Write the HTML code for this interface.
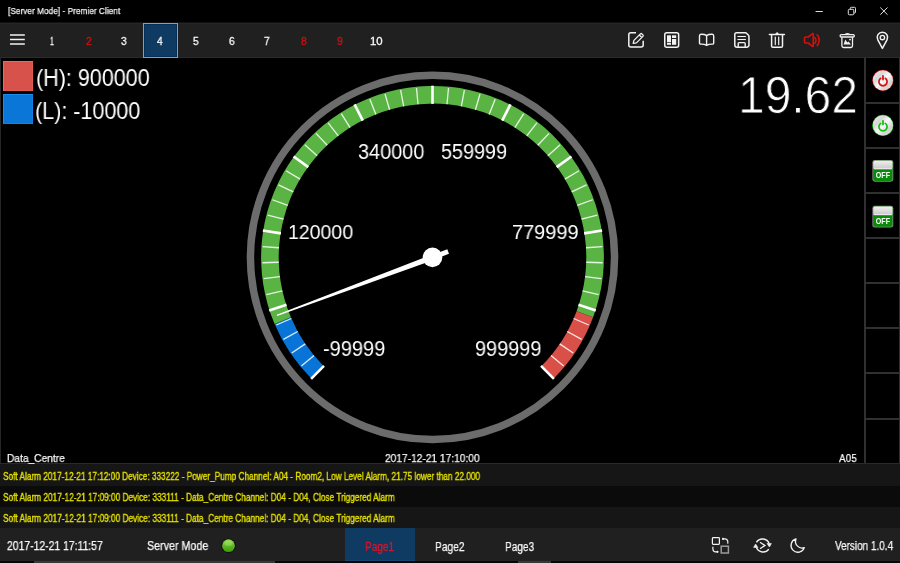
<!DOCTYPE html><html><head><meta charset="utf-8"><style>
*{margin:0;padding:0;box-sizing:border-box}
html,body{width:900px;height:563px;overflow:hidden;background:#000;font-family:"Liberation Sans",sans-serif}
.t{position:absolute;white-space:nowrap;line-height:1;transform-origin:0 0;will-change:transform}
.abs{position:absolute}
</style></head><body>
<div class="abs" style="left:0;top:0;width:900px;height:22px;background:#000"></div><div class="abs" style="left:0;top:22px;width:900px;height:1px;background:#121212"></div><div class="abs" style="left:0;top:23px;width:900px;height:34px;background:#202020;border-top:1px solid #262626"></div><div class="abs" style="left:0;top:57px;width:900px;height:1px;background:#2c2c2c"></div><div class="abs" style="left:143px;top:23px;width:35px;height:35px;background:#0f3a62;border:1px solid #7ea0c2;box-shadow:inset 0 0 0 1px #03305a"></div><div class="abs" style="left:0;top:58px;width:1px;height:406px;background:#262626"></div><div class="abs" style="left:864px;top:58px;width:2px;height:406px;background:#303030"></div><div class="abs" style="left:899px;top:58px;width:1px;height:406px;background:#303030"></div><div class="abs" style="left:864px;top:102px;width:36px;height:2px;background:#303030"></div><div class="abs" style="left:864px;top:147px;width:36px;height:2px;background:#303030"></div><div class="abs" style="left:864px;top:192px;width:36px;height:2px;background:#303030"></div><div class="abs" style="left:864px;top:237px;width:36px;height:2px;background:#303030"></div><div class="abs" style="left:864px;top:282px;width:36px;height:2px;background:#303030"></div><div class="abs" style="left:864px;top:327px;width:36px;height:2px;background:#303030"></div><div class="abs" style="left:864px;top:372px;width:36px;height:2px;background:#303030"></div><div class="abs" style="left:864px;top:418px;width:36px;height:2px;background:#303030"></div><div class="abs" style="left:0;top:463px;width:900px;height:1px;background:#2a2a2a"></div><div class="abs" style="left:0;top:464px;width:900px;height:22px;background:#161616"></div><div class="abs" style="left:0;top:486px;width:900px;height:21px;background:#0b0b0b"></div><div class="abs" style="left:0;top:507px;width:900px;height:21px;background:#161616"></div><div class="abs" style="left:0;top:528px;width:900px;height:33px;background:#202020;border-bottom:1px solid #242424"></div><div class="abs" style="left:0;top:561px;width:900px;height:2px;background:#060606"></div><div class="abs" style="left:34px;top:561px;width:241px;height:2px;background:#383838"></div><div class="abs" style="left:518px;top:561px;width:33px;height:2px;background:#383838"></div><div class="abs" style="left:345px;top:528px;width:70px;height:33px;background:#0f3a62;border-bottom:1px solid #12466f"></div><svg class="abs" style="left:0;top:0" width="900" height="563" viewBox="0 0 900 563"><circle cx="432.5" cy="257.4" r="182.05" fill="none" stroke="#6c6c6c" stroke-width="7.5"/><path d="M311.30,378.60 A171.4,171.4 0 0 1 274.62,324.12 L290.83,317.27 A153.8,153.8 0 0 0 323.75,366.15 Z" fill="#0874d8"/><path d="M274.62,324.12 A171.4,171.4 0 1 1 593.09,317.30 L576.60,311.15 A153.8,153.8 0 1 0 290.83,317.27 Z" fill="#5ab444"/><path d="M593.09,317.30 A171.4,171.4 0 0 1 553.70,378.60 L541.25,366.15 A153.8,153.8 0 0 0 576.60,311.15 Z" fill="#d85048"/><line x1="323.96" y1="365.94" x2="311.09" y2="378.81" stroke="#ffffff" stroke-width="2.6"/><line x1="314.00" y1="355.44" x2="301.36" y2="365.89" stroke="rgba(255,255,255,0.85)" stroke-width="1.3"/><line x1="305.30" y1="343.85" x2="291.73" y2="353.07" stroke="rgba(255,255,255,0.85)" stroke-width="1.3"/><line x1="297.72" y1="331.49" x2="283.35" y2="339.39" stroke="rgba(255,255,255,0.85)" stroke-width="1.3"/><line x1="291.35" y1="318.48" x2="276.30" y2="324.99" stroke="rgba(255,255,255,0.85)" stroke-width="1.3"/><line x1="286.51" y1="304.83" x2="269.20" y2="310.46" stroke="#ffffff" stroke-width="2.6"/><line x1="282.40" y1="290.95" x2="266.40" y2="294.53" stroke="rgba(255,255,255,0.85)" stroke-width="1.3"/><line x1="279.91" y1="276.68" x2="263.64" y2="278.73" stroke="rgba(255,255,255,0.85)" stroke-width="1.3"/><line x1="278.78" y1="262.23" x2="262.38" y2="262.75" stroke="rgba(255,255,255,0.85)" stroke-width="1.3"/><line x1="279.00" y1="247.74" x2="262.64" y2="246.71" stroke="rgba(255,255,255,0.85)" stroke-width="1.3"/><line x1="280.89" y1="233.39" x2="262.91" y2="230.54" stroke="#ffffff" stroke-width="2.6"/><line x1="283.53" y1="219.15" x2="267.65" y2="215.07" stroke="rgba(255,255,255,0.85)" stroke-width="1.3"/><line x1="287.79" y1="205.30" x2="272.36" y2="199.75" stroke="rgba(255,255,255,0.85)" stroke-width="1.3"/><line x1="293.34" y1="191.92" x2="278.50" y2="184.93" stroke="rgba(255,255,255,0.85)" stroke-width="1.3"/><line x1="300.12" y1="179.11" x2="286.00" y2="170.76" stroke="rgba(255,255,255,0.85)" stroke-width="1.3"/><line x1="308.32" y1="167.17" x2="293.59" y2="156.48" stroke="#ffffff" stroke-width="2.6"/><line x1="317.13" y1="155.69" x2="304.83" y2="144.84" stroke="rgba(255,255,255,0.85)" stroke-width="1.3"/><line x1="327.22" y1="145.28" x2="315.99" y2="133.33" stroke="rgba(255,255,255,0.85)" stroke-width="1.3"/><line x1="338.23" y1="135.87" x2="328.18" y2="122.92" stroke="rgba(255,255,255,0.85)" stroke-width="1.3"/><line x1="350.09" y1="127.54" x2="341.30" y2="113.70" stroke="rgba(255,255,255,0.85)" stroke-width="1.3"/><line x1="362.81" y1="120.63" x2="354.55" y2="104.41" stroke="#ffffff" stroke-width="2.6"/><line x1="375.88" y1="114.40" x2="369.85" y2="99.15" stroke="rgba(255,255,255,0.85)" stroke-width="1.3"/><line x1="389.59" y1="109.71" x2="385.02" y2="93.96" stroke="rgba(255,255,255,0.85)" stroke-width="1.3"/><line x1="403.68" y1="106.32" x2="400.61" y2="90.21" stroke="rgba(255,255,255,0.85)" stroke-width="1.3"/><line x1="418.03" y1="104.28" x2="416.48" y2="87.96" stroke="rgba(255,255,255,0.85)" stroke-width="1.3"/><line x1="432.50" y1="103.90" x2="432.50" y2="85.70" stroke="#ffffff" stroke-width="2.6"/><line x1="446.97" y1="104.28" x2="448.52" y2="87.96" stroke="rgba(255,255,255,0.85)" stroke-width="1.3"/><line x1="461.32" y1="106.32" x2="464.39" y2="90.21" stroke="rgba(255,255,255,0.85)" stroke-width="1.3"/><line x1="475.41" y1="109.71" x2="479.98" y2="93.96" stroke="rgba(255,255,255,0.85)" stroke-width="1.3"/><line x1="489.12" y1="114.40" x2="495.15" y2="99.15" stroke="rgba(255,255,255,0.85)" stroke-width="1.3"/><line x1="502.19" y1="120.63" x2="510.45" y2="104.41" stroke="#ffffff" stroke-width="2.6"/><line x1="514.91" y1="127.54" x2="523.70" y2="113.70" stroke="rgba(255,255,255,0.85)" stroke-width="1.3"/><line x1="526.77" y1="135.87" x2="536.82" y2="122.92" stroke="rgba(255,255,255,0.85)" stroke-width="1.3"/><line x1="537.78" y1="145.28" x2="549.01" y2="133.33" stroke="rgba(255,255,255,0.85)" stroke-width="1.3"/><line x1="547.87" y1="155.69" x2="560.17" y2="144.84" stroke="rgba(255,255,255,0.85)" stroke-width="1.3"/><line x1="556.68" y1="167.17" x2="571.41" y2="156.48" stroke="#ffffff" stroke-width="2.6"/><line x1="564.88" y1="179.11" x2="579.00" y2="170.76" stroke="rgba(255,255,255,0.85)" stroke-width="1.3"/><line x1="571.66" y1="191.92" x2="586.50" y2="184.93" stroke="rgba(255,255,255,0.85)" stroke-width="1.3"/><line x1="577.21" y1="205.30" x2="592.64" y2="199.75" stroke="rgba(255,255,255,0.85)" stroke-width="1.3"/><line x1="581.47" y1="219.15" x2="597.35" y2="215.07" stroke="rgba(255,255,255,0.85)" stroke-width="1.3"/><line x1="584.11" y1="233.39" x2="602.09" y2="230.54" stroke="#ffffff" stroke-width="2.6"/><line x1="586.00" y1="247.74" x2="602.36" y2="246.71" stroke="rgba(255,255,255,0.85)" stroke-width="1.3"/><line x1="586.22" y1="262.23" x2="602.62" y2="262.75" stroke="rgba(255,255,255,0.85)" stroke-width="1.3"/><line x1="585.09" y1="276.68" x2="601.36" y2="278.73" stroke="rgba(255,255,255,0.85)" stroke-width="1.3"/><line x1="582.60" y1="290.95" x2="598.60" y2="294.53" stroke="rgba(255,255,255,0.85)" stroke-width="1.3"/><line x1="578.49" y1="304.83" x2="595.80" y2="310.46" stroke="#ffffff" stroke-width="2.6"/><line x1="573.65" y1="318.48" x2="588.70" y2="324.99" stroke="rgba(255,255,255,0.85)" stroke-width="1.3"/><line x1="567.28" y1="331.49" x2="581.65" y2="339.39" stroke="rgba(255,255,255,0.85)" stroke-width="1.3"/><line x1="559.70" y1="343.85" x2="573.27" y2="353.07" stroke="rgba(255,255,255,0.85)" stroke-width="1.3"/><line x1="551.00" y1="355.44" x2="563.64" y2="365.89" stroke="rgba(255,255,255,0.85)" stroke-width="1.3"/><line x1="541.04" y1="365.94" x2="553.91" y2="378.81" stroke="#ffffff" stroke-width="2.6"/><polygon points="433.46,259.98 277.21,316.05 276.72,314.74 431.54,254.82" fill="#fff"/><polygon points="433.34,259.65 448.99,253.81 447.31,249.32 431.66,255.15" fill="#fff"/><circle cx="432.5" cy="257.4" r="9.8" fill="#fff"/></svg><div class="abs" style="left:3px;top:61px;width:30px;height:30px;background:#d6524a;border:1px solid #f0665c;border-right-color:#e05a50;border-bottom-color:#e05a50"></div><div class="abs" style="left:3px;top:94px;width:30px;height:30px;background:#0a76d8;border:1px solid #1a8cf0;border-right-color:#1280e0;border-bottom-color:#1280e0"></div><div class="t" id="t0" style="left:7.88px;top:6.38px;font-size:9.59px;color:#f0f0f0;font-weight:normal;transform:scaleX(0.8674);-webkit-text-stroke:0.25px #f0f0f0;">[Server Mode] - Premier Client</div>
<div class="t" id="t1" style="left:50.20px;top:36.33px;font-size:10.71px;color:#f8f8f8;font-weight:normal;transform:scaleX(0.6390);-webkit-text-stroke:0.3px #f8f8f8;">1</div>
<div class="t" id="t2" style="left:85.68px;top:36.33px;font-size:10.71px;color:#d40f0f;font-weight:normal;transform:scaleX(0.9500);-webkit-text-stroke:0.3px #d40f0f;">2</div>
<div class="t" id="t3" style="left:121.28px;top:36.33px;font-size:10.71px;color:#f8f8f8;font-weight:normal;transform:scaleX(0.9500);-webkit-text-stroke:0.3px #f8f8f8;">3</div>
<div class="t" id="t4" style="left:157.28px;top:36.33px;font-size:10.71px;color:#f8f8f8;font-weight:normal;transform:scaleX(0.9500);-webkit-text-stroke:0.3px #f8f8f8;">4</div>
<div class="t" id="t5" style="left:192.88px;top:36.33px;font-size:10.71px;color:#f8f8f8;font-weight:normal;transform:scaleX(0.9500);-webkit-text-stroke:0.3px #f8f8f8;">5</div>
<div class="t" id="t6" style="left:229.18px;top:36.33px;font-size:10.71px;color:#f8f8f8;font-weight:normal;transform:scaleX(0.9500);-webkit-text-stroke:0.3px #f8f8f8;">6</div>
<div class="t" id="t7" style="left:264.10px;top:36.33px;font-size:10.71px;color:#f8f8f8;font-weight:normal;transform:scaleX(0.9500);-webkit-text-stroke:0.3px #f8f8f8;">7</div>
<div class="t" id="t8" style="left:300.96px;top:36.33px;font-size:10.71px;color:#d40f0f;font-weight:normal;transform:scaleX(0.9500);-webkit-text-stroke:0.3px #d40f0f;">8</div>
<div class="t" id="t9" style="left:336.96px;top:36.33px;font-size:10.71px;color:#d40f0f;font-weight:normal;transform:scaleX(0.9500);-webkit-text-stroke:0.3px #d40f0f;">9</div>
<div class="t" id="t10" style="left:369.60px;top:36.33px;font-size:10.71px;color:#f8f8f8;font-weight:normal;transform:scaleX(1.0624);-webkit-text-stroke:0.3px #f8f8f8;">10</div>
<div class="t" id="t11" style="left:35.76px;top:67.24px;font-size:23.11px;color:#fff;font-weight:normal;transform:scaleX(0.9312);">(H): 900000</div>
<div class="t" id="t12" style="left:35.20px;top:100.21px;font-size:23.26px;color:#fff;font-weight:normal;transform:scaleX(0.9262);">(L): -10000</div>
<div class="t" id="t13" style="left:738.46px;top:69.48px;font-size:52.00px;color:#fff;font-weight:normal;transform:scaleX(0.9219);-webkit-text-stroke:0.9px #000;">19.62</div>
<div class="t" id="t14" style="left:357.64px;top:141.88px;font-size:21.29px;color:#fff;font-weight:normal;transform:scaleX(0.9340);">340000</div>
<div class="t" id="t15" style="left:441.32px;top:141.88px;font-size:21.29px;color:#fff;font-weight:normal;transform:scaleX(0.9298);">559999</div>
<div class="t" id="t16" style="left:288.34px;top:222.23px;font-size:20.29px;color:#fff;font-weight:normal;transform:scaleX(0.9620);">120000</div>
<div class="t" id="t17" style="left:511.74px;top:222.19px;font-size:20.57px;color:#fff;font-weight:normal;transform:scaleX(0.9701);">779999</div>
<div class="t" id="t18" style="left:323.40px;top:338.98px;font-size:21.29px;color:#fff;font-weight:normal;transform:scaleX(0.9397);">-99999</div>
<div class="t" id="t19" style="left:474.96px;top:338.98px;font-size:21.29px;color:#fff;font-weight:normal;transform:scaleX(0.9340);">999999</div>
<div class="t" id="t20" style="left:6.60px;top:453.47px;font-size:10.90px;color:#f8f8f8;font-weight:normal;transform:scaleX(0.9361);-webkit-text-stroke:0.25px #f8f8f8;">Data_Centre</div>
<div class="t" id="t21" style="left:384.88px;top:453.13px;font-size:11.43px;color:#f8f8f8;font-weight:normal;transform:scaleX(0.8921);-webkit-text-stroke:0.25px #f8f8f8;">2017-12-21 17:10:00</div>
<div class="t" id="t22" style="left:839.48px;top:451.96px;font-size:11.63px;color:#f8f8f8;font-weight:normal;transform:scaleX(0.8599);-webkit-text-stroke:0.25px #f8f8f8;">A05</div>
<div class="t" id="t23" style="left:3.00px;top:471.51px;font-size:10.03px;color:#e4e000;font-weight:normal;transform:scaleX(0.8230);-webkit-text-stroke:0.35px #e4e000;">Soft Alarm 2017-12-21 17:12:00 Device: 333222 - Power_Pump Channel: A04 - Room2, Low Level Alarm, 21.75 lower than 22.000</div>
<div class="t" id="t24" style="left:2.88px;top:492.91px;font-size:10.03px;color:#e4e000;font-weight:normal;transform:scaleX(0.8256);-webkit-text-stroke:0.35px #e4e000;">Soft Alarm 2017-12-21 17:09:00 Device: 333111 - Data_Centre Channel: D04 - D04, Close Triggered Alarm</div>
<div class="t" id="t25" style="left:2.88px;top:514.01px;font-size:10.03px;color:#e4e000;font-weight:normal;transform:scaleX(0.8256);-webkit-text-stroke:0.35px #e4e000;">Soft Alarm 2017-12-21 17:09:00 Device: 333111 - Data_Centre Channel: D04 - D04, Close Triggered Alarm</div>
<div class="t" id="t26" style="left:6.90px;top:540.96px;font-size:11.86px;color:#f8f8f8;font-weight:normal;transform:scaleX(0.8762);-webkit-text-stroke:0.25px #f8f8f8;">2017-12-21 17:11:57</div>
<div class="t" id="t27" style="left:146.92px;top:539.79px;font-size:12.06px;color:#f8f8f8;font-weight:normal;transform:scaleX(0.8895);-webkit-text-stroke:0.25px #f8f8f8;">Server Mode</div>
<div class="t" id="t28" style="left:365.24px;top:539.63px;font-size:13.08px;color:#dc1428;font-weight:normal;transform:scaleX(0.7707);-webkit-text-stroke:0.3px #dc1428;">Page1</div>
<div class="t" id="t29" style="left:435.04px;top:539.63px;font-size:13.08px;color:#f8f8f8;font-weight:normal;transform:scaleX(0.7813);-webkit-text-stroke:0.25px #f8f8f8;">Page2</div>
<div class="t" id="t30" style="left:505.14px;top:539.63px;font-size:13.08px;color:#f8f8f8;font-weight:normal;transform:scaleX(0.7719);-webkit-text-stroke:0.25px #f8f8f8;">Page3</div>
<div class="t" id="t31" style="left:834.72px;top:540.81px;font-size:11.92px;color:#f8f8f8;font-weight:normal;transform:scaleX(0.8351);-webkit-text-stroke:0.25px #f8f8f8;">Version 1.0.4</div><svg class="abs" style="left:0;top:0" width="900" height="563" viewBox="0 0 900 563"><line x1="10" y1="35" x2="24.8" y2="35" stroke="#f2f2f2" stroke-width="1.5"/><line x1="10" y1="39.5" x2="24.8" y2="39.5" stroke="#f2f2f2" stroke-width="1.5"/><line x1="10" y1="44" x2="24.8" y2="44" stroke="#f2f2f2" stroke-width="1.5"/><line x1="815.6" y1="11.5" x2="822.8" y2="11.5" stroke="#e0e0e0" stroke-width="1"/><rect x="848.3" y="9.3" width="5.5" height="5.5" rx="1" fill="none" stroke="#e0e0e0" stroke-width="1"/><path d="M850.3,9.3 V8.3 a1,1 0 0 1 1,-1 H854.5 a1,1 0 0 1 1,1 V12 a1,1 0 0 1 -1,1 H853.8" fill="none" stroke="#e0e0e0" stroke-width="1"/><path d="M880.3,7.5 L887.5,14.7 M887.5,7.5 L880.3,14.7" stroke="#e0e0e0" stroke-width="1"/><path d="M636,32.8 H630.8 a2,2 0 0 0 -2,2 V45 a2,2 0 0 0 2,2 H641.2 a2,2 0 0 0 2,-2 V40.8" fill="none" stroke="#f2f2f2" stroke-width="1.5"/><path d="M633.2,43.4 L633.9,40.4 L640.4,33.9 a1.1,1.1 0 0 1 1.5,0 L642.9,34.9 a1.1,1.1 0 0 1 0,1.5 L636.4,42.9 Z M639.3,35 L641.8,37.5" fill="none" stroke="#f2f2f2" stroke-width="1.3" stroke-linejoin="round"/><rect x="664.75" y="32.75" width="13.9" height="14.5" rx="2" fill="none" stroke="#f2f2f2" stroke-width="1.5"/><rect x="667" y="35.3" width="4" height="7" fill="#f2f2f2"/><rect x="667" y="43" width="4" height="1.8" fill="#f2f2f2"/><rect x="672" y="35.3" width="4.2" height="2.7" fill="#f2f2f2"/><rect x="672" y="39" width="4.2" height="5.8" fill="#f2f2f2"/><path d="M706.6,35.6 C705.2,34.6 703.2,34.2 701,34.3 a1.6,1.6 0 0 0 -1.5,1.6 V42.9 a1.2,1.2 0 0 0 1.2,1.2 C702.8,44 705,44.4 706.6,45.3 C708.2,44.4 710.4,44 712.5,44.1 a1.2,1.2 0 0 0 1.2,-1.2 V35.9 a1.6,1.6 0 0 0 -1.5,-1.6 C710,34.2 708,34.6 706.6,35.6 Z M706.6,35.6 V45.2" fill="none" stroke="#f2f2f2" stroke-width="1.4" stroke-linejoin="round"/><path d="M736.6,32.8 H745.4 a1.5,1.5 0 0 1 1.1,0.45 L748.5,35.3 a1.5,1.5 0 0 1 0.45,1.1 V45 a2.2,2.2 0 0 1 -2.2,2.2 H737 a2.2,2.2 0 0 1 -2.2,-2.2 V34.6 a1.8,1.8 0 0 1 1.8,-1.8 Z" fill="none" stroke="#f2f2f2" stroke-width="1.5"/><line x1="737.4" y1="36.5" x2="745.9" y2="36.5" stroke="#f2f2f2" stroke-width="1.1"/><line x1="737.4" y1="39.5" x2="745.9" y2="39.5" stroke="#f2f2f2" stroke-width="1.1"/><path d="M738.2,47 V43.6 a1,1 0 0 1 1,-1 H744.2 a1,1 0 0 1 1,1 V47" fill="none" stroke="#f2f2f2" stroke-width="1.4"/><path d="M769.4,34.5 H784.4" stroke="#f2f2f2" stroke-width="1.5" stroke-linecap="round"/><path d="M775.7,34 L777.1,32.3 L778.5,34 Z" fill="#f2f2f2" stroke="#f2f2f2" stroke-width="0.6" stroke-linejoin="round"/><path d="M771.6,34.8 V45.9 a1.3,1.3 0 0 0 1.3,1.3 H781.2 a1.3,1.3 0 0 0 1.3,-1.3 V34.8" fill="none" stroke="#f2f2f2" stroke-width="1.5"/><line x1="775.3" y1="37" x2="775.3" y2="44.6" stroke="#f2f2f2" stroke-width="1.2" stroke-linecap="round"/><line x1="778.7" y1="37" x2="778.7" y2="44.6" stroke="#f2f2f2" stroke-width="1.2" stroke-linecap="round"/><path d="M812.6,33.6 L808.2,37 H805.6 a1.1,1.1 0 0 0 -1.1,1.1 V41.9 a1.1,1.1 0 0 0 1.1,1.1 H808.2 L812.6,46.4 a0.5,0.5 0 0 0 0.6,-0.4 V34 a0.5,0.5 0 0 0 -0.6,-0.4 Z" fill="none" stroke="#d80e0e" stroke-width="1.6" stroke-linejoin="round"/><path d="M813.6,37.3 a2.9,3.2 0 0 1 0,6.3" fill="none" stroke="#d80e0e" stroke-width="1.5"/><path d="M816.8,34.3 a8.5,8.5 0 0 1 0,11.8" fill="none" stroke="#d80e0e" stroke-width="1.6"/><rect x="840.1" y="34.6" width="14.2" height="2.4" rx="1.2" fill="none" stroke="#f2f2f2" stroke-width="1.3"/><path d="M844.6,34.4 a2.8,1.5 0 0 1 5.6,0 Z" fill="#f2f2f2"/><path d="M841.9,37.2 V45.8 a1.7,1.7 0 0 0 1.7,1.7 H850.8 a1.7,1.7 0 0 0 1.7,-1.7 V37.2" fill="none" stroke="#f2f2f2" stroke-width="1.3"/><path d="M843.6,44.4 L845.3,39.6 L847.3,42.6 L848.5,41.4 L851,44.4 Z" fill="#f2f2f2"/><circle cx="850" cy="39.6" r="0.9" fill="#f2f2f2"/><path d="M882.4,48.4 L877.8,39.8 a5.2,5.2 0 1 1 9.2,0 Z" fill="none" stroke="#f2f2f2" stroke-width="1.5" stroke-linejoin="round"/><circle cx="882.4" cy="37.6" r="2.2" fill="none" stroke="#f2f2f2" stroke-width="1.4"/><rect x="712.4" y="537.6" width="7" height="6.8" rx="0.8" fill="none" stroke="#f2f2f2" stroke-width="1.2"/><rect x="721.2" y="546.2" width="7.2" height="6.8" fill="none" stroke="#9a9a9a" stroke-width="1.5"/><path d="M723.2,538.9 H725 a2.8,2.8 0 0 1 2.8,2.8 V543.2" fill="none" stroke="#f2f2f2" stroke-width="1.2" stroke-linecap="round"/><circle cx="723" cy="538.9" r="1.1" fill="#f2f2f2"/><path d="M712.9,547 V549 a2.8,2.8 0 0 0 2.8,2.8 H717.4" fill="none" stroke="#f2f2f2" stroke-width="1.2" stroke-linecap="round"/><circle cx="717.5" cy="551.8" r="1.1" fill="#f2f2f2"/><path d="M756.4,542.3 A7.2,7.2 0 0 1 769.2,543.6" fill="none" stroke="#f2f2f2" stroke-width="1.4"/><path d="M768.8,549.1 A7.2,7.2 0 0 1 756.4,547.6" fill="none" stroke="#f2f2f2" stroke-width="1.4"/><path d="M767,543.4 L771.4,543.6 L769.4,547 Z M758,547.6 L753.6,547.4 L755.6,544 Z" fill="#f2f2f2" stroke="#f2f2f2" stroke-width="0.6" stroke-linejoin="round"/><path d="M760,542.3 L764.9,545.5 L760,548.7" fill="none" stroke="#f2f2f2" stroke-width="1.3"/><path d="M796,538.9 A6.8,6.8 0 1 0 804.3,547.6 A6.6,6.6 0 0 1 796,538.9 Z" fill="none" stroke="#f2f2f2" stroke-width="1.3" stroke-linejoin="round"/><defs><radialGradient id="gd" cx="0.4" cy="0.35" r="0.65"><stop offset="0" stop-color="#b8f070"/><stop offset="0.5" stop-color="#5cc020"/><stop offset="1" stop-color="#2c7a08"/></radialGradient><linearGradient id="gd2" x1="0" y1="0" x2="0" y2="1"><stop offset="0" stop-color="#86dc3a"/><stop offset="0.55" stop-color="#5cb820"/><stop offset="1" stop-color="#3c9a0c"/></linearGradient><radialGradient id="silver" cx="0.5" cy="0.5" r="0.5"><stop offset="0" stop-color="#f4f4f4"/><stop offset="0.7" stop-color="#d4d4d4"/><stop offset="1" stop-color="#eaeaea"/></radialGradient><linearGradient id="silv2" x1="0" y1="0" x2="1" y2="1"><stop offset="0" stop-color="#f6f6f6"/><stop offset="0.3" stop-color="#d6d6d6"/><stop offset="0.5" stop-color="#fafafa"/><stop offset="0.75" stop-color="#d2d2d2"/><stop offset="1" stop-color="#eeeeee"/></linearGradient><linearGradient id="swg" x1="0" y1="0" x2="0" y2="1"><stop offset="0" stop-color="#f0f0f0"/><stop offset="1" stop-color="#c8c8c8"/></linearGradient></defs><circle cx="228.5" cy="545.7" r="7.2" fill="#120a16"/><circle cx="228.5" cy="545.7" r="6.4" fill="url(#gd2)"/><ellipse cx="228.5" cy="543.2" rx="4" ry="2.6" fill="rgba(255,255,255,0.22)"/><circle cx="882.9" cy="80.3" r="10.6" fill="#d41010"/><circle cx="882.9" cy="80.3" r="10.1" fill="url(#silv2)"/><path d="M880.7,78.3 a4.1,4.1 0 1 0 4.6,0" fill="none" stroke="#d41010" stroke-width="1.7" stroke-linecap="round"/><line x1="883" y1="75.89999999999999" x2="883" y2="79.5" stroke="#d41010" stroke-width="1.8" stroke-linecap="round"/><circle cx="882.9" cy="125.4" r="10.6" fill="#10c010"/><circle cx="882.9" cy="125.4" r="10.1" fill="url(#silv2)"/><path d="M880.7,123.4 a4.1,4.1 0 1 0 4.6,0" fill="none" stroke="#10c010" stroke-width="1.7" stroke-linecap="round"/><line x1="883" y1="121.0" x2="883" y2="124.60000000000001" stroke="#10c010" stroke-width="1.8" stroke-linecap="round"/><rect x="872.4" y="159.9" width="20.9" height="21.8" rx="2.4" fill="#8a8a8a"/><rect x="873.2" y="160.70000000000002" width="19.3" height="20.2" rx="1.8" fill="#0a8a0a"/><rect x="873.2" y="160.70000000000002" width="19.3" height="8.4" rx="1.8" fill="url(#swg)"/><rect x="873.6" y="168.3" width="18.5" height="1" fill="#f4eef4"/><text x="882.9" y="177.8" font-family="Liberation Sans" font-weight="bold" font-size="8.4" fill="#fff" text-anchor="middle" textLength="14.2" lengthAdjust="spacingAndGlyphs">OFF</text><rect x="872.4" y="205.8" width="20.9" height="21.8" rx="2.4" fill="#8a8a8a"/><rect x="873.2" y="206.60000000000002" width="19.3" height="20.2" rx="1.8" fill="#0a8a0a"/><rect x="873.2" y="206.60000000000002" width="19.3" height="8.4" rx="1.8" fill="url(#swg)"/><rect x="873.6" y="214.20000000000002" width="18.5" height="1" fill="#f4eef4"/><text x="882.9" y="223.70000000000002" font-family="Liberation Sans" font-weight="bold" font-size="8.4" fill="#fff" text-anchor="middle" textLength="14.2" lengthAdjust="spacingAndGlyphs">OFF</text></svg></body></html>
